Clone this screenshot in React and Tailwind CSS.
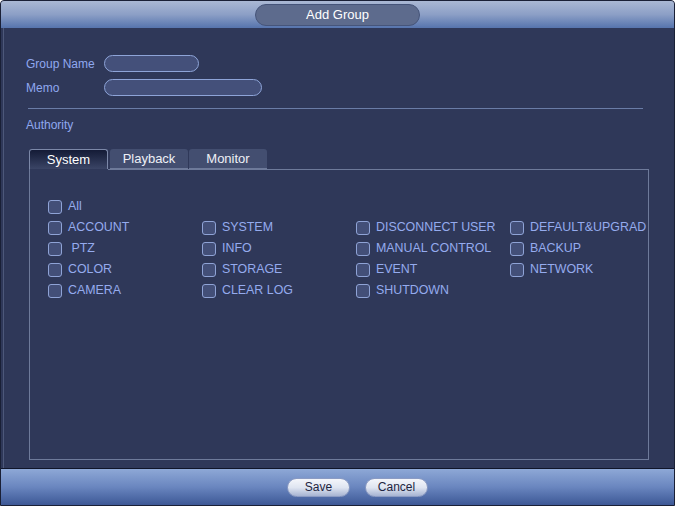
import React from "react";

const rows = [
  ["ACCOUNT", "SYSTEM", "DISCONNECT USER", "DEFAULT&UPGRAD"],
  [" PTZ", "INFO", "MANUAL CONTROL", "BACKUP"],
  ["COLOR", "STORAGE", "EVENT", "NETWORK"],
  ["CAMERA", "CLEAR LOG", "SHUTDOWN", ""],
];

function Check({ label }) {
  return (
    <div className="flex items-center h-[21px] whitespace-pre">
      <span className="w-[14px] h-[14px] rounded-[3px] border border-[#8fa3d6] bg-[#434f78] shrink-0" />
      <span className="ml-[6px] text-[12.4px] text-[#95abee]">{label}</span>
    </div>
  );
}

export default function App() {
  const tabs = ["System", "Playback", "Monitor"];

  return (
    <div
      className="w-[675px] h-[506px] flex flex-col bg-[#2f3859] border border-[#1a2036] rounded-t-[4px] overflow-hidden shadow-[inset_2px_0_0_#2f3859,inset_3px_0_0_#4d587a]"
      style={{ fontFamily: '"Liberation Sans", Arial, sans-serif' }}
    >
      {/* title bar */}
      <div className="h-[27px] shrink-0 flex items-center justify-center bg-gradient-to-b from-[#aab8d4] via-[#8c9fc6] to-[#5674ad]">
        <div className="w-[165px] h-[22px] mt-[1px] rounded-full bg-[#5d6b8d] border border-[#46557a] flex items-center justify-center text-[13px] text-white">
          Add Group
        </div>
      </div>

      {/* body */}
      <div className="flex-1 pl-[25px] pt-[27px]">
        <div className="flex items-center h-[17px]">
          <span className="w-[78px] text-[12px] text-[#8fa8f0]">Group Name</span>
          <span className="w-[95px] h-[17px] rounded-full border border-[#8ea4d8] bg-[#44507a]" />
        </div>
        <div className="flex items-center h-[17px] mt-[7px]">
          <span className="w-[78px] text-[12px] text-[#8fa8f0]">Memo</span>
          <span className="w-[158px] h-[17px] rounded-full border border-[#8ea4d8] bg-[#44507a]" />
        </div>

        <div className="ml-[2px] mt-[12px] w-[615px] h-px bg-[#6a7ca6]" />

        <div className="mt-[9px] text-[12px] leading-[15px] text-[#8fa8f0]">Authority</div>

        <div className="ml-[3px] mt-[16px] flex items-end gap-[1px]">
          {tabs.map((t, i) => (
            <div
              key={t}
              className={
                i === 0
                  ? "w-[79px] h-[20px] rounded-t-[3px] border border-b-0 border-[#7c88a8] bg-gradient-to-b from-[#141b36] to-[#3b4566] text-white text-[13px] flex items-center justify-center mr-[1px]"
                  : "w-[78px] h-[20px] rounded-t-[3px] bg-[#434e70] text-[#eef0f6] text-[13px] flex items-center justify-center border-b border-[#6e7a9a]"
              }
            >
              {t}
            </div>
          ))}
          <div className="flex-1" />
        </div>

        <div className="ml-[3px] w-[620px] h-[291px] border border-t-0 border-[#6e7a9a] relative">
          <div className="absolute top-0 left-[78px] right-0 h-px bg-[#6e7a9a]" />
          <div className="pl-[18px] pt-[27px]">
            <Check label="All" />
            {rows.map((r, i) => (
              <div key={i} className="grid grid-cols-[154px_154px_154px_154px]">
                {r.map((l, j) => (
                  <div key={j}>{l && <Check label={l} />}</div>
                ))}
              </div>
            ))}
          </div>
        </div>
      </div>

      {/* bottom bar */}
      <div className="h-[37px] shrink-0 border-t border-[#10152a] bg-gradient-to-b from-[#8ea8d6] via-[#6a86bf] to-[#3d5896] flex items-center justify-center pl-[40px] gap-[15px]">
        {["Save", "Cancel"].map((b) => (
          <div
            key={b}
            className="w-[63px] h-[19px] rounded-full bg-gradient-to-b from-[#f4f6fb] via-[#dfe5f1] to-[#a7b4d2] border border-[#8b9bc3] flex items-center justify-center text-[12px] text-[#1e2541]"
          >
            {b}
          </div>
        ))}
      </div>
    </div>
  );
}
